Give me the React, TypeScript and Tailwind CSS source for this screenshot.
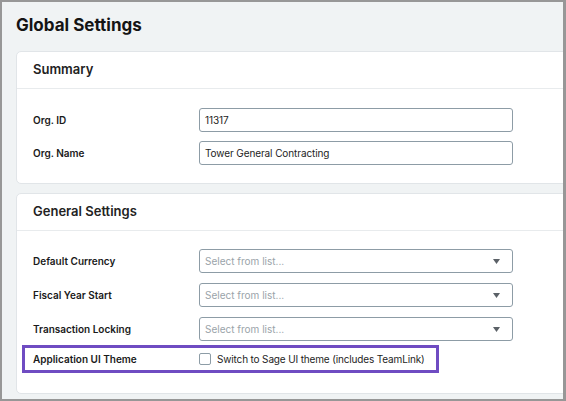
import React from "react";

const font = { fontFamily: "Inter, 'Noto Sans', sans-serif" };

function Field({ value }: { value: string }) {
  return (
    <div className="w-[314px] h-[24px] border border-[#8d9ca6] rounded-[3px] bg-white flex items-center px-[5px] text-[10px] tracking-[-0.1px] text-[#1d1d1d]">
      {value}
    </div>
  );
}

function Select() {
  return (
    <div className="w-[314px] h-[24px] border border-[#8d9ca6] rounded-[3px] bg-white flex items-center justify-between pl-[5px] pr-[12px] text-[10px] text-[#9aa3a9]">
      <span>Select from list...</span>
      <svg width="7" height="5" viewBox="0 0 7 5">
        <path d="M0 0h7L3.5 5z" fill="#5b6167" />
      </svg>
    </div>
  );
}

function Row({ label, children }: { label: string; children: React.ReactNode }) {
  return (
    <div className="flex items-center h-[24px]">
      <div className="w-[166px] shrink-0 text-[10px] font-semibold text-[#1a1a1a]">{label}</div>
      {children}
    </div>
  );
}

function Card({ title, children }: { title: string; children: React.ReactNode }) {
  return (
    <div className="bg-white border border-[#e1e5e8] rounded-[5px] mr-[-12px]">
      <div className="h-[37px] flex items-center px-[16px] border-b border-[#e8ebed] text-[13px] font-semibold text-[#222]">
        {title}
      </div>
      {children}
    </div>
  );
}

export default function App() {
  return (
    <div
      style={font}
      className="w-[566px] h-[401px] overflow-hidden bg-[#f0f3f4] border-t-2 border-l-2 border-r-[3px] border-b-2 border-[#979797]"
    >
      <div className="pl-[14px] pt-[13px]">
        <h1 className="text-[17px] leading-[20px] font-bold text-[#141414] h-[20px]">Global Settings</h1>
        <div className="mt-[16px] flex flex-col gap-[9px]">
          <Card title="Summary">
            <div className="pt-[19px] pb-[18px] pl-[16px] flex flex-col gap-[9px]">
              <Row label="Org. ID">
                <Field value="11317" />
              </Row>
              <Row label="Org. Name">
                <Field value="Tower General Contracting" />
              </Row>
            </div>
          </Card>
          <Card title="General Settings">
            <div className="pt-[18px] pb-[20px] pl-[16px] flex flex-col">
              <div className="flex flex-col gap-[10px]">
                <Row label="Default Currency">
                  <Select />
                </Row>
                <Row label="Fiscal Year Start">
                  <Select />
                </Row>
                <Row label="Transaction Locking">
                  <Select />
                </Row>
              </div>
              <div className="mt-[4px] ml-[-11px] w-[417px] h-[28px] border-[3px] border-[#6f4cc2] flex items-center pl-[8px]">
                <div className="w-[166px] shrink-0 text-[10px] font-semibold text-[#1a1a1a]">Application UI Theme</div>
                <div className="w-[12px] h-[12px] border border-[#8d9ca6] rounded-[2px] bg-white" />
                <span className="ml-[6px] text-[10px] tracking-[-0.15px] text-[#1d1d1d]">Switch to Sage UI theme (includes TeamLink)</span>
              </div>
            </div>
          </Card>
        </div>
      </div>
    </div>
  );
}
